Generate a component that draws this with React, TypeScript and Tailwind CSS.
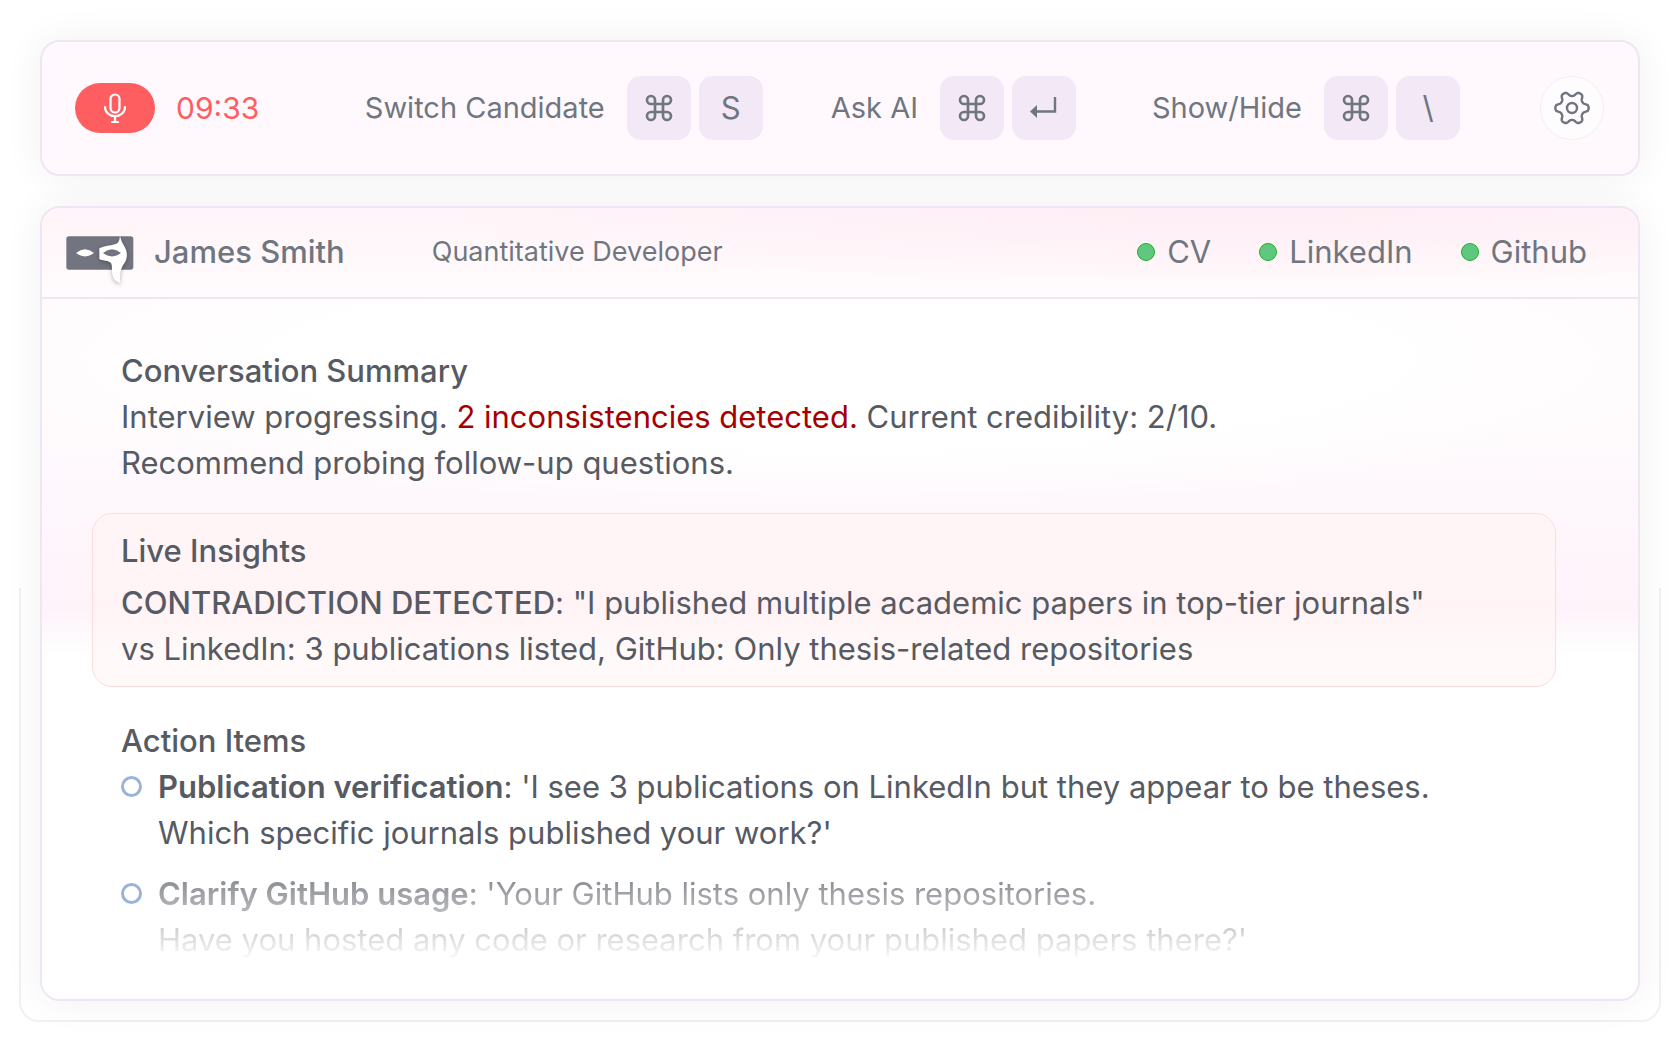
import type { ReactNode } from "react";
import { Command } from "lucide-react";

const GEAR_PATH =
  Array.from({ length: 121 }, (_, i) => {
    const angle = (i / 120) * Math.PI * 2;
    const radius = 14.3 + 2.5 * Math.tanh(1.6 * Math.cos(6 * angle));
    const x = (20 + radius * Math.cos(angle)).toFixed(2);
    const y = (20 + radius * Math.sin(angle)).toFixed(2);
    return `${i === 0 ? "M" : "L"}${x} ${y}`;
  }).join("") + "Z";

function GearIcon() {
  return (
    <svg viewBox="0 0 40 40" className="size-10" fill="none" stroke="#6f7680" strokeWidth="2.4" strokeLinejoin="round" aria-hidden="true">
      <path d={GEAR_PATH} />
      <circle cx="20" cy="20" r="5" />
    </svg>
  );
}

function MicIcon() {
  return (
    <svg viewBox="0 0 24 32" className="h-8 w-6" fill="none" stroke="white" strokeWidth="2.2" strokeLinecap="round" aria-hidden="true">
      <rect x="7.5" y="2.5" width="9" height="18" rx="4.5" />
      <path d="M2 15c0 5.5 4.5 9 10 9s10-3.5 10-9M12 24v6M9 30h6" />
    </svg>
  );
}

function ReturnIcon() {
  return (
    <svg viewBox="0 0 28 24" className="h-6 w-7" fill="none" aria-hidden="true">
      <path d="M25 1v14.5H7" stroke="#6f7680" strokeWidth="2.4" />
      <path d="M0 15.5l7-6.5v13z" fill="#6f7680" />
    </svg>
  );
}

function MaskLogo() {
  return (
    <svg viewBox="20 44 204 147" className="mt-4 h-[49px] w-[68px] shrink-0 overflow-visible" aria-hidden="true">
      <rect x="21" y="48" width="201" height="100" rx="8" fill="#72757f" />
      <path d="M50 98q27-22 54 0q-27 21-54 0z" fill="white" />
      <path
        className="drop-shadow-[0_4px_6px_rgba(0,0,0,0.3)]"
        d="M182 46C180 62 178 68 166 72C152 77 136 76 120 84V116C132 122 147 120 155 128C160 138 156 150 160 166C164 180 172 185 183 187C180 164 184 140 197 126C207 108 202 88 194 76C189 67 184 58 182 46z"
        fill="white"
      />
      <path d="M131 98q27-22 54 0q-27 21-54 0z" fill="#72757f" />
    </svg>
  );
}

function Key({ children }: { children: ReactNode }) {
  return (
    <kbd className="flex size-16 items-center justify-center rounded-[14px] bg-[#f3e8f5] font-[inherit] text-[31px]">
      {children}
    </kbd>
  );
}

function Shortcut({ label, lastKey }: { label: string; lastKey: ReactNode }) {
  return (
    <div className="flex items-center gap-[22px] whitespace-nowrap last:ml-2">
      <span>{label}</span>
      <div className="flex gap-2">
        <Key>
          <Command className="size-8" strokeWidth={2} />
        </Key>
        <Key>{lastKey}</Key>
      </div>
    </div>
  );
}

function Toolbar() {
  return (
    <header className="flex items-center rounded-[20px] border-2 border-[#f0e6f3] bg-[#fff9fe] py-[34px] pr-[34px] pl-[33px] text-[29px] leading-9 text-[#6f7680] shadow-[0_0_40px_rgba(0,0,0,0.06)]">
      <button type="button" aria-label="Microphone" className="flex h-[50px] w-20 items-center justify-center rounded-full bg-[#ff5e61]">
        <MicIcon />
      </button>
      <time className="ml-[21px] text-[30px] text-[#ff5e61]">09:33</time>
      <div className="ml-auto flex items-center gap-[68px]">
        <Shortcut label="Switch Candidate" lastKey="S" />
        <Shortcut label="Ask AI" lastKey={<ReturnIcon />} />
        <Shortcut label="Show/Hide" lastKey="\" />
      </div>
      <button type="button" aria-label="Settings" className="ml-20 flex size-16 items-center justify-center rounded-full border border-[#f4eff6] bg-[#fffcfd]">
        <GearIcon />
      </button>
    </header>
  );
}

function Source({ name }: { name: string }) {
  return (
    <li className="flex items-center gap-3">
      <span className="size-[18px] rounded-full border border-[#22b222] bg-[#60c780]" />
      {name}
    </li>
  );
}

function CandidateHeader() {
  return (
    <div className="flex items-center border-b-2 border-[#f0e6f3] bg-[radial-gradient(ellipse_50%_90%_at_75%_0%,#feeef5,transparent),linear-gradient(to_bottom,#fff4f9,#fffcfd)] pr-[51px] pb-0.5 pl-6 text-[31px] leading-[87px] text-[#6f7680]">
      <MaskLogo />
      <h1 className="ml-5 font-medium">James Smith</h1>
      <p className="ml-[87px] text-[27px]">Quantitative Developer</p>
      <ul className="ml-auto flex gap-12">
        <Source name="CV" />
        <Source name="LinkedIn" />
        <Source name="Github" />
      </ul>
    </div>
  );
}

function ActionItem({ title, faded, children }: { title: string; faded?: boolean; children: ReactNode }) {
  return (
    <li>
      <label className="flex gap-4">
        <input type="checkbox" className="mt-3 size-[21px] shrink-0 appearance-none rounded-full border-[3px] border-[#9bb4d6]" />
        <span className={faded ? "[mask-image:linear-gradient(to_bottom,rgba(0,0,0,0.76),transparent)]" : ""}>
          <strong className="font-semibold">{title}</strong>
          {children}
        </span>
      </label>
    </li>
  );
}

function CandidatePanel() {
  return (
    <main className="relative mt-[30px]">
      <div className="absolute -inset-x-[21px] top-[382px] -bottom-[21px] rounded-b-[20px] border-2 border-t-0 border-[#f1f1f2]" />
      <div className="relative overflow-hidden rounded-[20px] border-2 border-[#f0e6f3] bg-white shadow-[0_0_40px_rgba(0,0,0,0.06)]">
        <CandidateHeader />
        <div className="bg-[radial-gradient(ellipse_56%_150px_at_50%_60px,#fff_60%,transparent),linear-gradient(to_bottom,#fffbfd,#fffbfd_120px,#fef7fc_220px,#fef3f9_310px,#fff_355px)] px-[50px] pt-[49px] pb-9 text-[31px] leading-[46px] text-[#565a62]">
          <section className="px-[29px]">
            <h2 className="font-medium">Conversation Summary</h2>
            <p>
              Interview progressing. <span className="text-[#a50000]">2 inconsistencies detected.</span> Current credibility: 2/10.
              <br />
              Recommend probing follow-up questions.
            </p>
          </section>
          <section className="mt-[27px] mr-[32px] rounded-[20px] border border-[#fddcdd] bg-[#fff4f3]/50 px-7 pt-3.5 pb-3.5">
            <h2 className="font-medium">Live Insights</h2>
            <p className="mt-1.5">
              <strong className="font-medium">CONTRADICTION DETECTED</strong>: "I published multiple academic papers in top-tier journals"
              <br />
              vs LinkedIn: 3 publications listed, GitHub: Only thesis-related repositories
            </p>
          </section>
          <section className="mt-[31px] px-[29px]">
            <h2 className="font-medium">Action Items</h2>
            <ul className="flex flex-col gap-[15px]">
              <ActionItem title="Publication verification">
                : 'I see 3 publications on LinkedIn but they appear to be theses.
                <br />
                Which specific journals published your work?'
              </ActionItem>
              <ActionItem title="Clarify GitHub usage" faded>
                : 'Your GitHub lists only thesis repositories.
                <br />
                Have you hosted any code or research from your published papers there?'
              </ActionItem>
            </ul>
          </section>
        </div>
      </div>
    </main>
  );
}

export default function App() {
  return (
    <div className="min-h-screen bg-white px-10 pt-10 pb-11 font-[Inter,'Liberation_Sans',sans-serif]">
      <Toolbar />
      <CandidatePanel />
    </div>
  );
}
